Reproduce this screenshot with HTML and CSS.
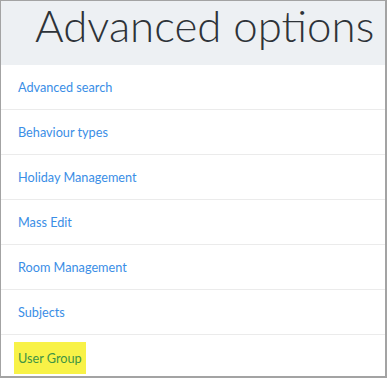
FILE: index.html
```html
<!DOCTYPE html>
<html lang="en">
<head>
<meta charset="UTF-8" />
<title>Advanced options</title>
<link rel="stylesheet" href="styles.css">
</head>
<body>

<div class="panel">
  <!-- Page header -->
  <div class="panel-head">
    <h1>Advanced options</h1>
  </div>

  <ul class="option-list">
    <li><a href="#">Advanced search</a></li>
    <li><a href="#">Behaviour types</a></li>
    <li><a href="#">Holiday Management</a></li>
    <li><a href="#">Mass Edit</a></li>
    <li><a href="#">Room Management</a></li>
    <li><a href="#">Subjects</a></li>
    <li class="marked"><a href="#">User Group</a></li>
  </ul>
</div>

</body>
</html>
```

FILE: styles.css
```css
*, *::before, *::after {
  box-sizing: border-box;
}
html, body {
  margin: 0;
  padding: 0;
  background: #fff;
  font-family: Lato, 'Liberation Sans', sans-serif;
}

/* Outer frame */
.panel {
  width: 387px;
  height: 378px;
  border: solid #a3a3a3;
  border-width: 1px 2px 2px 1px;
  overflow: hidden;
}

/* Header */
.panel-head {
  height: 64px;
  background: #edf0f3;
  padding-left: 34px;
}
.panel-head h1 {
  margin: 0;
  font-weight: 300;
  font-size: 43.8px;
  line-height: 48px;
  color: #2e3338;
  white-space: nowrap;
}

/* Links */
.option-list {
  list-style: none;
  margin: 0;
  padding: 0;
}
.option-list li {
  height: 45px;
  border-bottom: 1px solid #ebebeb;
  display: flex;
  align-items: center;
  padding-left: 17px;
}
.option-list li:last-child {
  border-bottom: none;
}
.option-list a {
  font-size: 12.7px;
  color: #3a8ee6;
  text-decoration: none;
}
.option-list .marked a {
  background: #f8f247;
  color: #3f9444;
  padding: 8px 4px;
  margin-left: -4px;
}
```
